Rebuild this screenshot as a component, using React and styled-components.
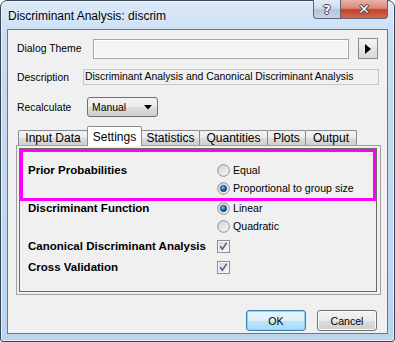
import React from 'react';
import styled, { createGlobalStyle } from 'styled-components';

const Global = createGlobalStyle`
  html, body { margin: 0; padding: 0; background: #ffffff; }
  body { font-family: "Liberation Sans", Arial, sans-serif; }
  * { box-sizing: border-box; }
`;

const Window = styled.div`
  width: 395px;
  height: 342px;
  border: 1px solid #3b4757;
  border-radius: 7px 7px 3px 3px;
  background: linear-gradient(to bottom, #dce9f7 0%, #c6dcf2 12%, #bcd5ef 100%);
  box-shadow: inset 0 0 0 1px rgba(255, 255, 255, 0.55);
  padding: 0 6px 7px 6px;
  display: flex;
  flex-direction: column;
`;

const TitleBar = styled.div`
  height: 28px;
  display: flex;
  align-items: flex-start;
`;

const Title = styled.div`
  flex: 1;
  font-size: 12px;
  line-height: 14px;
  padding: 8px 0 0 1px;
  color: #000;
  text-shadow: 0 0 6px rgba(255, 255, 255, 0.9);
`;

const CaptionButton = styled.div`
  width: ${p => p.$w}px;
  height: 19px;
  margin-top: -1px;
  border: 1px solid #5a6677;
  border-top: none;
  display: flex;
  align-items: center;
  justify-content: center;
  font-family: "DejaVu Sans", sans-serif;
  font-weight: bold;
  font-size: ${p => (p.$close ? 14 : 13)}px;
  color: #ffffff;
  text-shadow: -1px 0 #3d3d3d, 1px 0 #3d3d3d, 0 -1px #3d3d3d, 0 1px #3d3d3d;
  background: ${p =>
    p.$close
      ? 'linear-gradient(to bottom, #e8b3a9 0%, #d8897a 45%, #c5412b 55%, #d3694f 100%)'
      : 'linear-gradient(to bottom, #e3ecf6 0%, #cfdcea 45%, #b3c4d8 55%, #c5d6e8 100%)'};
  border-radius: ${p => (p.$close ? '0 0 4px 0' : '0 0 0 4px')};
  border-left: ${p => (p.$close ? 'none' : '1px solid #5a6677')};
`;

const Client = styled.div`
  flex: 1;
  background: #f0f0f0;
  border: 1px solid #6c7888;
  display: flex;
  flex-direction: column;
  padding: 8px 0 0 9px;
`;

const FormRow = styled.div`
  display: flex;
  align-items: center;
  height: ${p => p.$h}px;
  margin-top: ${p => p.$mt || 0}px;
`;

const Label = styled.div`
  width: ${p => p.$w}px;
  font-size: 10.4px;
  color: #000;
  white-space: nowrap;
`;

const ThemeField = styled.div`
  width: 256px;
  height: 20px;
  border: 1px solid #a5a5a5;
  background: #f4f4f4;
  box-shadow: inset 1px 1px 0 #ffffff, inset -1px -1px 0 #ffffff;
`;

const ArrowButton = styled.div`
  width: 20px;
  height: 21px;
  margin-left: 9px;
  border: 1px solid #8a8a8a;
  background: linear-gradient(to bottom, #f6f6f6 0%, #e6e6e6 50%, #d9d9d9 100%);
  display: flex;
  align-items: center;
  justify-content: center;
`;

const DescField = styled.div`
  width: 296px;
  height: 16px;
  border: 1px solid #c6c6c6;
  background: #f0f0f0;
  font-size: 10.4px;
  line-height: 14px;
  padding-left: 1px;
  white-space: nowrap;
  overflow: hidden;
`;

const Combo = styled.div`
  width: 71px;
  height: 20px;
  border: 1px solid #707070;
  border-radius: 3px;
  background: linear-gradient(to bottom, #f2f2f2 0%, #ebebeb 50%, #dddddd 51%, #cfcfcf 100%);
  display: flex;
  align-items: center;
  justify-content: space-between;
  padding: 0 5px 0 4px;
  font-size: 10.4px;
`;

const Tabs = styled.div`
  margin-top: 9px;
  margin-left: -1px;
  width: 365px;
  display: flex;
  flex-direction: column;
`;

const TabStrip = styled.div`
  height: 19px;
  display: flex;
  align-items: flex-end;
  padding-left: 2px;
`;

const Tab = styled.div`
  width: ${p => p.$w}px;
  height: ${p => (p.$active ? 20 : 15)}px;
  margin-left: -1px;
  margin-bottom: ${p => (p.$active ? -1 : 0)}px;
  position: relative;
  z-index: ${p => (p.$active ? 2 : 1)};
  border: 1px solid #898c95;
  border-bottom: none;
  border-radius: 2px 2px 0 0;
  background: ${p =>
    p.$active ? '#ffffff' : 'linear-gradient(to bottom, #f3f3f3 0%, #ebebeb 50%, #dddddd 51%, #cfcfcf 100%)'};
  font-size: 12px;
  color: #000;
  display: flex;
  align-items: ${p => (p.$active ? 'flex-start' : 'center')};
  padding-top: ${p => (p.$active ? 3 : 0)}px;
  justify-content: center;
  white-space: nowrap;
  &:first-child { margin-left: 0; }
`;

const Panel = styled.div`
  height: 150px;
  border: 1px solid #a0a0a0;
  background: #f0f0f0;
  padding: 2px 3px 2px 2px;
  display: flex;
`;

const InnerBox = styled.div`
  flex: 1;
  border: 1px solid #6b6b6b;
  display: flex;
  flex-direction: column;
`;

const Highlight = styled.div`
  height: 52px;
  border: 3px solid #ff00ff;
  padding: 9px 0 0 5px;
  display: grid;
  grid-template-columns: 189px 1fr;
  align-items: start;
`;

const SettingRow = styled.div`
  display: grid;
  grid-template-columns: 189px 1fr;
  align-items: start;
  padding-left: 8px;
  margin-top: ${p => p.$mt || 0}px;
`;

const BoldLabel = styled.div`
  font-size: 11.5px;
  font-weight: bold;
  line-height: ${p => p.$lh || 18}px;
  color: #000;
  white-space: nowrap;
`;

const Options = styled.div`
  display: flex;
  flex-direction: column;
`;

const Option = styled.div`
  height: ${p => p.$h || 18}px;
  display: flex;
  align-items: center;
  gap: 3px;
  font-size: 10.6px;
  color: #000;
  white-space: nowrap;
`;

const ButtonRow = styled.div`
  display: flex;
  justify-content: flex-end;
  gap: 11px;
  padding-right: 10px;
  margin-top: 15px;
`;

const PushButton = styled.div`
  width: 60px;
  height: 21px;
  border: 1px solid ${p => (p.$default ? '#3c7fb1' : '#707070')};
  border-radius: 3px;
  background: ${p =>
    p.$default
      ? 'linear-gradient(to bottom, #eaf6fd 0%, #d9f0fc 50%, #bee6fd 51%, #a7d9f5 100%)'
      : 'linear-gradient(to bottom, #f2f2f2 0%, #ebebeb 50%, #dddddd 51%, #cfcfcf 100%)'};
  box-shadow: ${p => (p.$default ? 'inset 0 0 0 1px #98d1ef' : 'inset 0 0 0 1px #fcfcfc')};
  display: flex;
  align-items: center;
  justify-content: center;
  font-size: 10.6px;
  color: #000;
`;

const Radio = ({ checked }) => (
  <svg width="13" height="13" viewBox="0 0 13 13">
    <defs>
      <linearGradient id="rg" x1="0" y1="0" x2="1" y2="1">
        <stop offset="0" stopColor="#d0d0d0" />
        <stop offset="1" stopColor="#fbfbfb" />
      </linearGradient>
      <radialGradient id="rd" cx="0.4" cy="0.35" r="0.7">
        <stop offset="0" stopColor="#7fc3f2" />
        <stop offset="0.5" stopColor="#1f70bd" />
        <stop offset="1" stopColor="#0c3163" />
      </radialGradient>
    </defs>
    <circle cx="6.5" cy="6.5" r="5.8" fill="url(#rg)" stroke="#8e8f8f" strokeWidth="1" />
    {checked && <circle cx="6.5" cy="6.5" r="3.2" fill="url(#rd)" stroke="#1b3d6b" strokeWidth="0.6" />}
  </svg>
);

const Check = () => (
  <svg width="13" height="13" viewBox="0 0 13 13">
    <defs>
      <linearGradient id="cg" x1="0" y1="0" x2="1" y2="1">
        <stop offset="0" stopColor="#d6d6d6" />
        <stop offset="1" stopColor="#f8f8f8" />
      </linearGradient>
    </defs>
    <rect x="0.5" y="0.5" width="12" height="12" fill="#f4f4f4" stroke="#8e8f8f" />
    <rect x="2" y="2" width="9" height="9" fill="url(#cg)" />
    <path d="M3.2 6.3 L5.4 9.2 L9.8 2.6" fill="none" stroke="#4c5e92" strokeWidth="1.5" />
  </svg>
);

const ComboArrow = () => (
  <svg width="8" height="5" viewBox="0 0 8 5">
    <path d="M0 0 H8 L4 4.5 Z" fill="#000" />
  </svg>
);

const RightArrow = () => (
  <svg width="6" height="10" viewBox="0 0 6 10">
    <path d="M0 0 L6 5 L0 10 Z" fill="#000" />
  </svg>
);

const tabs = [
  { label: 'Input Data', w: 70 },
  { label: 'Settings', w: 55, active: true },
  { label: 'Statistics', w: 59 },
  { label: 'Quantities', w: 69 },
  { label: 'Plots', w: 39 },
  { label: 'Output', w: 52 },
];

export default function App() {
  return (
    <>
      <Global />
      <Window>
        <TitleBar>
          <Title>Discriminant Analysis: discrim</Title>
          <CaptionButton $w={28}>?</CaptionButton>
          <CaptionButton $w={47} $close>✕</CaptionButton>
        </TitleBar>
        <Client>
          <FormRow $h={21}>
            <Label $w={76}>Dialog Theme</Label>
            <ThemeField />
            <ArrowButton>
              <RightArrow />
            </ArrowButton>
          </FormRow>
          <FormRow $h={16} $mt={10}>
            <Label $w={66}>Description</Label>
            <DescField>Discriminant Analysis and Canonical Discriminant Analysis</DescField>
          </FormRow>
          <FormRow $h={20} $mt={12}>
            <Label $w={70}>Recalculate</Label>
            <Combo>
              <span>Manual</span>
              <ComboArrow />
            </Combo>
          </FormRow>
          <Tabs>
            <TabStrip>
              {tabs.map(t => (
                <Tab key={t.label} $w={t.w} $active={t.active}>
                  {t.label}
                </Tab>
              ))}
            </TabStrip>
            <Panel>
              <InnerBox>
                <Highlight>
                  <BoldLabel>Prior Probabilities</BoldLabel>
                  <Options>
                    <Option>
                      <Radio />
                      Equal
                    </Option>
                    <Option>
                      <Radio checked />
                      Proportional to group size
                    </Option>
                  </Options>
                </Highlight>
                <SettingRow $mt={-2}>
                  <BoldLabel>Discriminant Function</BoldLabel>
                  <Options>
                    <Option>
                      <Radio checked />
                      Linear
                    </Option>
                    <Option>
                      <Radio />
                      Quadratic
                    </Option>
                  </Options>
                </SettingRow>
                <SettingRow>
                  <BoldLabel $lh={22}>Canonical Discriminant Analysis</BoldLabel>
                  <Option $h={22}>
                    <Check />
                  </Option>
                </SettingRow>
                <SettingRow>
                  <BoldLabel $lh={21}>Cross Validation</BoldLabel>
                  <Option $h={21}>
                    <Check />
                  </Option>
                </SettingRow>
              </InnerBox>
            </Panel>
          </Tabs>
          <ButtonRow>
            <PushButton $default>OK</PushButton>
            <PushButton>Cancel</PushButton>
          </ButtonRow>
        </Client>
      </Window>
    </>
  );
}
